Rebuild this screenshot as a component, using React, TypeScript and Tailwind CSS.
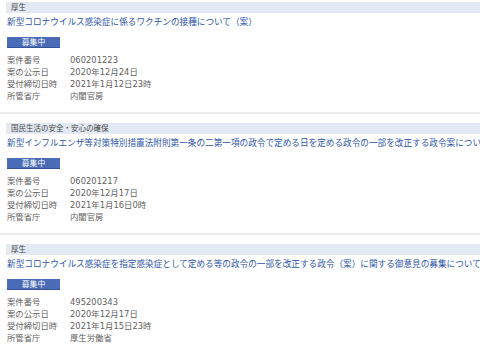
import React from "react";

type Item = {
  ministry: string;
  title: string;
  no: string;
  date: string;
  deadline: string;
  office: string;
};

const items: Item[] = [
  {
    ministry: "厚生",
    title: "新型コロナウイルス感染症に係るワクチンの接種について（案）",
    no: "060201223",
    date: "2020年12月24日",
    deadline: "2021年1月12日23時",
    office: "内閣官房",
  },
  {
    ministry: "国民生活の安全・安心の確保",
    title:
      "新型インフルエンザ等対策特別措置法附則第一条の二第一項の政令で定める日を定める政令の一部を改正する政令案について",
    no: "060201217",
    date: "2020年12月17日",
    deadline: "2021年1月16日0時",
    office: "内閣官房",
  },
  {
    ministry: "厚生",
    title:
      "新型コロナウイルス感染症を指定感染症として定める等の政令の一部を改正する政令（案）に関する御意見の募集について",
    no: "495200343",
    date: "2020年12月17日",
    deadline: "2021年1月15日23時",
    office: "厚生労働省",
  },
];

const font = { fontFamily: '"DejaVu Sans", "Noto Sans CJK JP", sans-serif' };

function Row({ label, value }: { label: string; value: string }) {
  return (
    <div className="flex h-[12px] items-center leading-[12px] text-[8.4px] text-[#5f5f5f]">
      <div className="w-[63px] shrink-0">{label}</div>
      <div>{value}</div>
    </div>
  );
}

export default function App() {
  return (
    <div className="w-[480px] h-[348px] overflow-hidden bg-white" style={font}>
      {items.map((it, i) => (
        <div
          key={i}
          className={`${i === 0 ? "pt-[2px]" : "pt-[9px]"} pb-[10px] border-b-2 border-[#ececec]`}
        >
          <div className="pl-[6px]">
            <div className="h-[11px] bg-[#e3e9f3] pl-[5px] text-[7.5px] leading-[11px] text-[#444444] whitespace-nowrap">
              {it.ministry}
            </div>
          </div>
          <div className="pl-[7px]">
            <div className="mt-[3px] h-[12px] leading-[12px] text-[8.65px] text-[#2d55a8] whitespace-nowrap overflow-hidden">
              {it.title}
            </div>
            <div className="mt-[9px] flex h-[11px] w-[53px] items-center justify-center bg-[#4a6bb6] border-b border-[#34539a] text-[7.8px] leading-[11px] text-white">
              募集中
            </div>
            <div className="mt-[6px] flex flex-col">
              <Row label="案件番号" value={it.no} />
              <Row label="案の公示日" value={it.date} />
              <Row label="受付締切日時" value={it.deadline} />
              <Row label="所管省庁" value={it.office} />
            </div>
          </div>
        </div>
      ))}
    </div>
  );
}
